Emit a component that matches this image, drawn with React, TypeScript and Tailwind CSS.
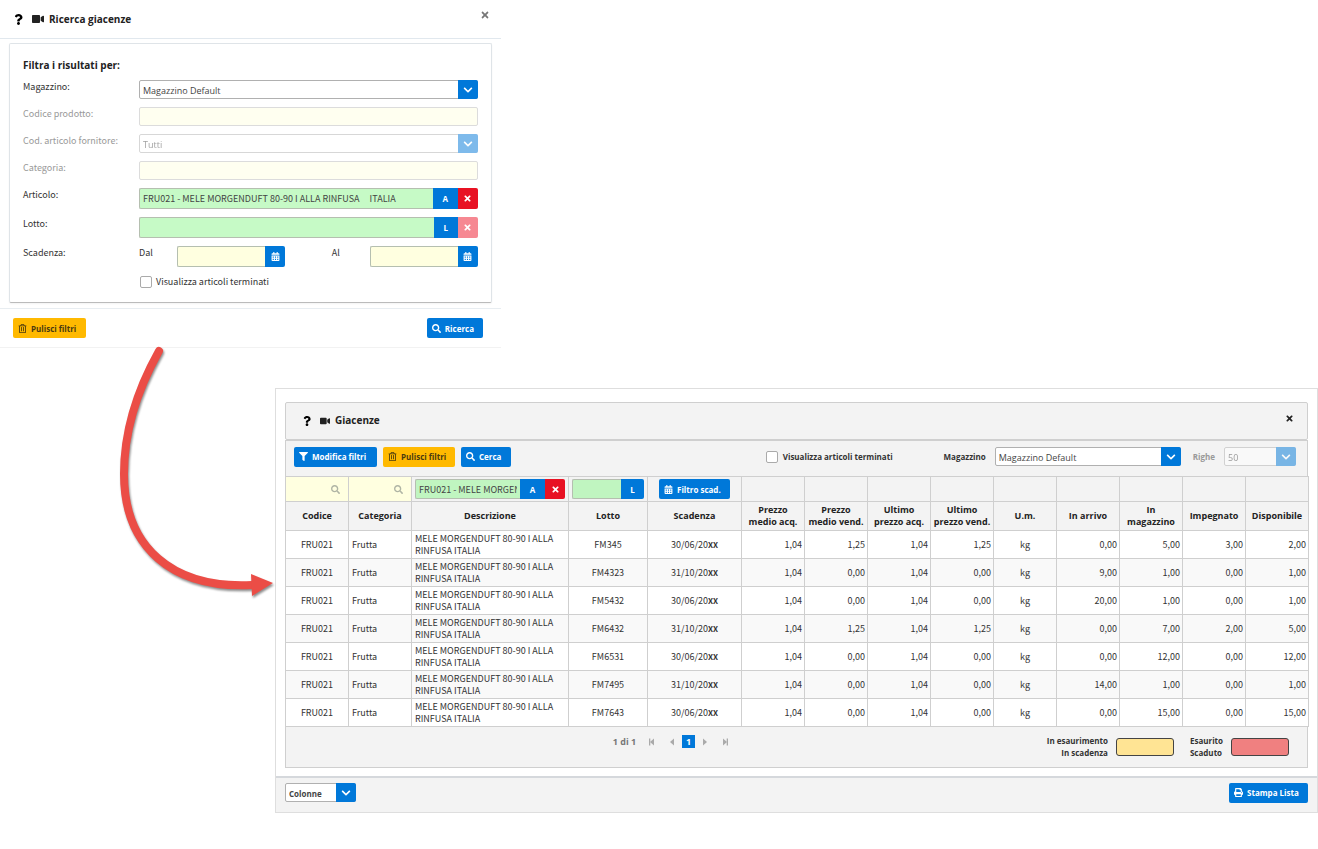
import { useState } from "react"
import type { ComponentProps, ReactNode } from "react"
import clsx from "clsx"
import {
  FaCalendarAlt,
  FaChevronDown,
  FaFilter,
  FaPrint,
  FaQuestion,
  FaRegTrashAlt,
  FaSearch,
  FaTimes,
  FaVideo,
} from "react-icons/fa"

const columns = [
  { label: "Codice", width: "w-[63px]", align: "text-center" },
  { label: "Categoria", width: "w-[63px]", align: "text-left" },
  { label: "Descrizione", width: "w-[157px]", align: "text-left" },
  { label: "Lotto", width: "w-[79px]", align: "text-center" },
  { label: "Scadenza", width: "w-[94px]", align: "text-center" },
  { label: "Prezzo\nmedio acq.", width: "w-[63px]", align: "text-right" },
  { label: "Prezzo\nmedio vend.", width: "w-[63px]", align: "text-right" },
  { label: "Ultimo\nprezzo acq.", width: "w-[63px]", align: "text-right" },
  { label: "Ultimo\nprezzo vend.", width: "w-[63px]", align: "text-right" },
  { label: "U.m.", width: "w-[63px]", align: "text-center" },
  { label: "In arrivo", width: "w-[63px]", align: "text-right" },
  { label: "In\nmagazzino", width: "w-[63px]", align: "text-right" },
  { label: "Impegnato", width: "w-[63px]", align: "text-right" },
  { label: "Disponibile", width: "w-[63px]", align: "text-right" },
]

const stock = [
  { lotto: "FM345", scadenza: "30/06/20", values: ["1,04", "1,25", "1,04", "1,25", "kg", "0,00", "5,00", "3,00", "2,00"] },
  { lotto: "FM4323", scadenza: "31/10/20", values: ["1,04", "0,00", "1,04", "0,00", "kg", "9,00", "1,00", "0,00", "1,00"] },
  { lotto: "FM5432", scadenza: "30/06/20", values: ["1,04", "0,00", "1,04", "0,00", "kg", "20,00", "1,00", "0,00", "1,00"] },
  { lotto: "FM6432", scadenza: "31/10/20", values: ["1,04", "1,25", "1,04", "1,25", "kg", "0,00", "7,00", "2,00", "5,00"] },
  { lotto: "FM6531", scadenza: "30/06/20", values: ["1,04", "0,00", "1,04", "0,00", "kg", "0,00", "12,00", "0,00", "12,00"] },
  { lotto: "FM7495", scadenza: "31/10/20", values: ["1,04", "0,00", "1,04", "0,00", "kg", "14,00", "1,00", "0,00", "1,00"] },
  { lotto: "FM7643", scadenza: "30/06/20", values: ["1,04", "0,00", "1,04", "0,00", "kg", "0,00", "15,00", "0,00", "15,00"] },
]

type ButtonProps = ComponentProps<"button"> & { icon: ReactNode; color?: "blue" | "yellow" }

function Button({ icon, color = "blue", children, className, ...props }: ButtonProps) {
  return (
    <button
      type="button"
      className={clsx(
        "flex h-5 shrink-0 items-center gap-1 rounded-xs pl-[5px] font-['Open_Sans',sans-serif] text-[8px] font-bold whitespace-nowrap",
        color === "blue" ? "bg-[#0078d9] text-white" : "bg-[#ffb900] text-[#4a3a10]",
        className,
      )}
      {...props}
    >
      {icon}
      {children}
    </button>
  )
}

type SelectProps = ComponentProps<"select"> & { option: string; wrapper?: string }

function Select({ option, wrapper, className, ...props }: SelectProps) {
  return (
    <div className={clsx("relative h-[19px]", wrapper, props.disabled && "opacity-50")}>
      <select
        className={clsx(
          "block size-full appearance-none rounded-xs border border-[#b0b0b0] bg-white pt-px pl-[3px] font-['Open_Sans',sans-serif] text-[#444]",
          className,
        )}
        {...props}
      >
        <option>{option}</option>
      </select>
      <span className="pointer-events-none absolute inset-y-0 right-0 flex w-5 items-center justify-center rounded-r-xs bg-[#0078d9] text-white">
        <FaChevronDown size={10} />
      </span>
    </div>
  )
}

function Addon({ label, className, children, ...props }: ComponentProps<"button"> & { label: string }) {
  return (
    <button
      type="button"
      aria-label={label}
      className={clsx(
        "flex h-full shrink-0 items-center justify-center font-['Open_Sans',sans-serif] text-[8px] font-bold text-white",
        className,
      )}
      {...props}
    >
      {children}
    </button>
  )
}

const fieldClass = "h-full min-w-0 flex-1 rounded-l-xs border border-r-0 border-[#b5bfb0] px-[3px] text-[#444]"

function DateField({ id }: { id: string }) {
  return (
    <div className="flex h-[21px] w-[108px]">
      <input id={id} className={clsx(fieldClass, "bg-[#ffffe0]")} />
      <Addon label="Apri calendario" className="w-5 rounded-r-xs bg-[#0078d9]">
        <FaCalendarAlt size={9} />
      </Addon>
    </div>
  )
}

function Row({ label, htmlFor, muted, children }: { label: string; htmlFor: string; muted?: boolean; children: ReactNode }) {
  return (
    <div className="grid grid-cols-[116px_1fr] items-start">
      <label htmlFor={htmlFor} className={muted ? "text-[#999]" : "text-[#333]"}>
        {label}
      </label>
      {children}
    </div>
  )
}

function SearchWindow() {
  const [showEnded, setShowEnded] = useState(false)

  return (
    <section className="w-[38%] min-w-[480px] border-b border-[#f2f2f2]">
      <header className="flex h-[39px] items-center border-b border-[#e1e8ee] pl-[13px]">
        <FaQuestion size={11} className="text-black" />
        <FaVideo size={12} className="ml-2 text-[#222]" />
        <h1 className="ml-[5px] font-['Open_Sans',sans-serif] text-[10px] font-bold text-[#222]">Ricerca giacenze</h1>
        <button type="button" aria-label="Chiudi" className="mr-[11px] mb-2 ml-auto text-[#777]">
          <FaTimes size={10} />
        </button>
      </header>

      <form className="mx-[9px] mt-1 flex flex-col gap-2 rounded-xs border border-[#dfe4e8] border-b-[#bbb] pt-[15px] pr-[13px] pb-[14px] pl-[13px] shadow-xs">
        <h2 className="font-['Open_Sans',sans-serif] text-[10px] leading-[13px] font-bold text-[#222]">Filtra i risultati per:</h2>
        <Row label="Magazzino:" htmlFor="magazzino">
          <Select id="magazzino" option="Magazzino Default" />
        </Row>
        <Row label="Codice prodotto:" htmlFor="codice" muted>
          <input id="codice" disabled className="h-[19px] w-full rounded-xs border border-[#dcdcdc] bg-[#fffff0]" />
        </Row>
        <Row label="Cod. articolo fornitore:" htmlFor="fornitore" muted>
          <Select id="fornitore" option="Tutti" disabled />
        </Row>
        <Row label="Categoria:" htmlFor="categoria" muted>
          <input id="categoria" disabled className="h-[19px] w-full rounded-xs border border-[#dcdcdc] bg-[#fffff0]" />
        </Row>
        <Row label="Articolo:" htmlFor="articolo">
          <div className="flex h-[21px]">
            <input
              id="articolo"
              className={clsx(fieldClass, "bg-[#c6fac6] whitespace-pre")}
              defaultValue="FRU021 - MELE MORGENDUFT 80-90 I ALLA RINFUSA     ITALIA"
            />
            <Addon label="Scegli articolo" className="w-[25px] bg-[#0078d9]">A</Addon>
            <Addon label="Rimuovi articolo" className="w-5 rounded-r-xs bg-[#e81123]"><FaTimes size={9} /></Addon>
          </div>
        </Row>
        <Row label="Lotto:" htmlFor="lotto">
          <div className="flex h-[21px]">
            <input id="lotto" className={clsx(fieldClass, "bg-[#c6fac6]")} />
            <Addon label="Scegli lotto" className="w-6 bg-[#0078d9]">L</Addon>
            <Addon label="Rimuovi lotto" disabled className="w-5 rounded-r-xs bg-[#f68892]"><FaTimes size={9} /></Addon>
          </div>
        </Row>
        <Row label="Scadenza:" htmlFor="dal">
          <div className="flex items-start justify-between text-[#333]">
            <div className="flex">
              <label htmlFor="dal" className="w-[38px]">Dal</label>
              <DateField id="dal" />
            </div>
            <div className="flex">
              <label htmlFor="al" className="w-[38px]">Al</label>
              <DateField id="al" />
            </div>
          </div>
        </Row>
        <label className="ml-[117px] flex items-center gap-1 text-[#333]">
          <input
            type="checkbox"
            checked={showEnded}
            onChange={(e) => setShowEnded(e.target.checked)}
            className="size-3 appearance-none rounded-xs border border-[#aaa] bg-white checked:bg-[#0078d9]"
          />
          Visualizza articoli terminati
        </label>
      </form>

      <footer className="mt-[5px] flex items-center justify-between border-t border-[#e8edf1] py-[9px] pr-[18px] pl-[13px]">
        <Button color="yellow" icon={<FaRegTrashAlt size={9} />} className="w-[73px]">Pulisci filtri</Button>
        <Button icon={<FaSearch size={9} />} className="w-14">Ricerca</Button>
      </footer>
    </section>
  )
}

function FilterRow() {
  return (
    <tr className="h-[25px] bg-[#f3f3f3]">
      {["codice", "categoria"].map((name) => (
        <td key={name} className="border border-[#cfcfcf] bg-[#ffffe0]">
          <div className="flex items-center pr-2">
            <input aria-label={`Filtra ${name}`} className="h-5 min-w-0 flex-1 pl-1" />
            <FaSearch size={9} className="shrink-0 text-[#b0b5a5]" />
          </div>
        </td>
      ))}
      <td className="border border-[#cfcfcf] px-[3px]">
        <div className="flex h-5">
          <input
            aria-label="Filtra articolo"
            className={clsx(fieldClass, "bg-[#c0f5c0]")}
            defaultValue="FRU021 - MELE MORGENDUFT 80-90 I ALLA RINFUSA"
          />
          <Addon label="Scegli articolo" className="w-[25px] bg-[#0078d9]">A</Addon>
          <Addon label="Rimuovi articolo" className="w-5 rounded-r-xs bg-[#e81123]"><FaTimes size={9} /></Addon>
        </div>
      </td>
      <td className="border border-[#cfcfcf] px-[3px]">
        <div className="flex h-5">
          <input aria-label="Filtra lotto" className={clsx(fieldClass, "bg-[#c0f5c0]")} />
          <Addon label="Scegli lotto" className="w-[23px] rounded-r-xs bg-[#0078d9]">L</Addon>
        </div>
      </td>
      <td className="border border-[#cfcfcf]">
        <Button icon={<FaCalendarAlt size={9} />} className="mx-auto w-[71px]">Filtro scad.</Button>
      </td>
      {columns.slice(5).map((column) => (
        <td key={column.label} className="border border-[#cfcfcf]" />
      ))}
    </tr>
  )
}

function PagerIcon({ last, edge }: { last?: boolean; edge?: boolean }) {
  return (
    <svg width="8" height="8" viewBox="0 0 8 8" fill="currentColor" className={clsx(last && "rotate-180")}>
      <path d="M6 0.5v7L2 4z" />
      {edge && <path d="M1 0.5h1.3v7H1z" />}
    </svg>
  )
}

function TableFooter() {
  return (
    <div className="flex h-[41px] items-start border border-t-0 border-[#cfcfcf] bg-[#f3f3f3] pt-2 font-['Open_Sans',sans-serif]">
      <nav className="ml-[32%] flex items-center text-[#aaa]">
        <span className="mr-3 font-bold text-[#777]">1 di 1</span>
        <button type="button" aria-label="Prima pagina" className="mr-3"><PagerIcon edge /></button>
        <button type="button" aria-label="Pagina precedente" className="mr-[6px]"><PagerIcon /></button>
        <button type="button" className="size-[13px] bg-[#0078d9] font-bold text-white">1</button>
        <button type="button" aria-label="Pagina successiva" className="ml-[6px]"><PagerIcon last /></button>
        <button type="button" aria-label="Ultima pagina" className="ml-3"><PagerIcon last edge /></button>
      </nav>
      <div className="mr-[18px] ml-auto flex items-center text-[8px] leading-[12px] font-bold text-[#333]">
        <p className="text-right">In esaurimento<br />In scadenza</p>
        <span className="ml-2 h-[18px] w-[58px] rounded-[3px] border border-[#444] bg-[#ffe494]" />
        <p className="ml-4">Esaurito<br />Scaduto</p>
        <span className="ml-2 h-[18px] w-[58px] rounded-[3px] border border-[#444] bg-[#f08080]" />
      </div>
    </div>
  )
}

function StockWindow() {
  const [showEnded, setShowEnded] = useState(false)

  return (
    <section className="mt-10 ml-[275px] border border-[#dedede]">
      <div className="px-[9px] pt-[13px] pb-2">
        <header className="flex h-[38px] items-center rounded-xs border border-[#cfcfcf] bg-[#f3f3f3] pr-[13px] pb-px pl-4">
          <FaQuestion size={10} className="text-black" />
          <FaVideo size={10} className="ml-2 text-[#222]" />
          <h1 className="ml-[5px] font-['Open_Sans',sans-serif] text-[10px] font-bold text-[#222]">Giacenze</h1>
          <button type="button" aria-label="Chiudi" className="mb-1 ml-auto text-[#222]">
            <FaTimes size={9} />
          </button>
        </header>

        <div className="flex h-[36px] items-center border border-b-0 border-[#cfcfcf] bg-[#f3f3f3] pr-[11px] pb-1 pl-2">
          <div className="flex gap-[6px]">
            <Button icon={<FaFilter size={9} />} className="w-[83px]">Modifica filtri</Button>
            <Button color="yellow" icon={<FaRegTrashAlt size={9} />} className="w-[72px]">Pulisci filtri</Button>
            <Button icon={<FaSearch size={9} />} className="w-[50px]">Cerca</Button>
          </div>
          <div className="ml-auto flex items-center font-['Open_Sans',sans-serif] text-[8px] font-bold text-[#333]">
            <label className="mr-[51px] flex items-center gap-[5px]">
              <input
                type="checkbox"
                checked={showEnded}
                onChange={(e) => setShowEnded(e.target.checked)}
                className="size-3 appearance-none rounded-xs border border-[#aaa] bg-white checked:bg-[#0078d9]"
              />
              Visualizza articoli terminati
            </label>
            <label htmlFor="deposito" className="mr-[9px]">Magazzino</label>
            <Select id="deposito" option="Magazzino Default" wrapper="w-[186px]" className="text-[9px] font-normal" />
            <label htmlFor="righe" className="mr-[9px] ml-3 text-[#999]">Righe</label>
            <Select id="righe" option="50" disabled wrapper="w-[72px]" className="text-[9px] font-normal" />
          </div>
        </div>

        <table className="w-full table-fixed border-collapse">
          <colgroup>
            {columns.map((column) => (
              <col key={column.label} className={column.width} />
            ))}
          </colgroup>
          <thead>
            <FilterRow />
            <tr className="h-[29px] bg-[#f3f3f3]">
              {columns.map((column) => (
                <th
                  key={column.label}
                  className="border border-[#cfcfcf] font-['Open_Sans',sans-serif] leading-[12px] font-bold whitespace-pre-line text-[#222]"
                >
                  {column.label}
                </th>
              ))}
            </tr>
          </thead>
          <tbody>
            {stock.map((row, i) => (
              <tr key={row.lotto} className={clsx("h-7 leading-[12px] text-[#333]", i % 2 === 1 && "bg-[#f9f9f9]")}>
                <td className="border border-[#cfcfcf] text-center">FRU021</td>
                <td className="border border-[#cfcfcf] px-[3px]">Frutta</td>
                <td className="border border-[#cfcfcf] px-[3px]">
                  MELE MORGENDUFT 80-90 I ALLA
                  <br />
                  RINFUSA ITALIA
                </td>
                <td className="border border-[#cfcfcf] text-center">{row.lotto}</td>
                <td className="border border-[#cfcfcf] text-center">
                  {row.scadenza}
                  <b className="text-[8px]">XX</b>
                </td>
                {row.values.map((value, j) => (
                  <td key={j} className={clsx("border border-[#cfcfcf] px-[2px]", columns[j + 5].align)}>
                    {value}
                  </td>
                ))}
              </tr>
            ))}
          </tbody>
        </table>
        <TableFooter />
      </div>

      <footer className="flex h-9 items-center justify-between border-t-2 border-[#d5d8dc] bg-[#f3f3f3] px-[9px] pb-[5px]">
        <Select aria-label="Colonne" option="Colonne" wrapper="w-[71px]" className="text-[8px] font-bold" />
        <Button icon={<FaPrint size={9} />} className="w-[79px]">Stampa Lista</Button>
      </footer>
    </section>
  )
}

// Leads from the search form to the list it opens
function FlowArrow() {
  return (
    <svg
      className="pointer-events-none absolute top-[340px] left-[110px] drop-shadow-[1px_2px_1px_rgba(0,0,0,0.45)]"
      width="170"
      height="265"
      viewBox="110 340 170 265"
      aria-hidden="true"
    >
      <path d="M159 351C136 392 124 435 124 474C124 547 172 589 252 585" fill="none" stroke="#eb4d46" strokeWidth="8" strokeLinecap="round" />
      <path d="M251 574L273 583L252 596Z" fill="#eb4d46" />
    </svg>
  )
}

export default function App() {
  return (
    <main className="relative min-h-screen bg-white font-['Noto_Sans_CJK_SC','Noto_Sans',sans-serif] text-[9px] leading-[13px]">
      <SearchWindow />
      <StockWindow />
      <FlowArrow />
    </main>
  )
}
